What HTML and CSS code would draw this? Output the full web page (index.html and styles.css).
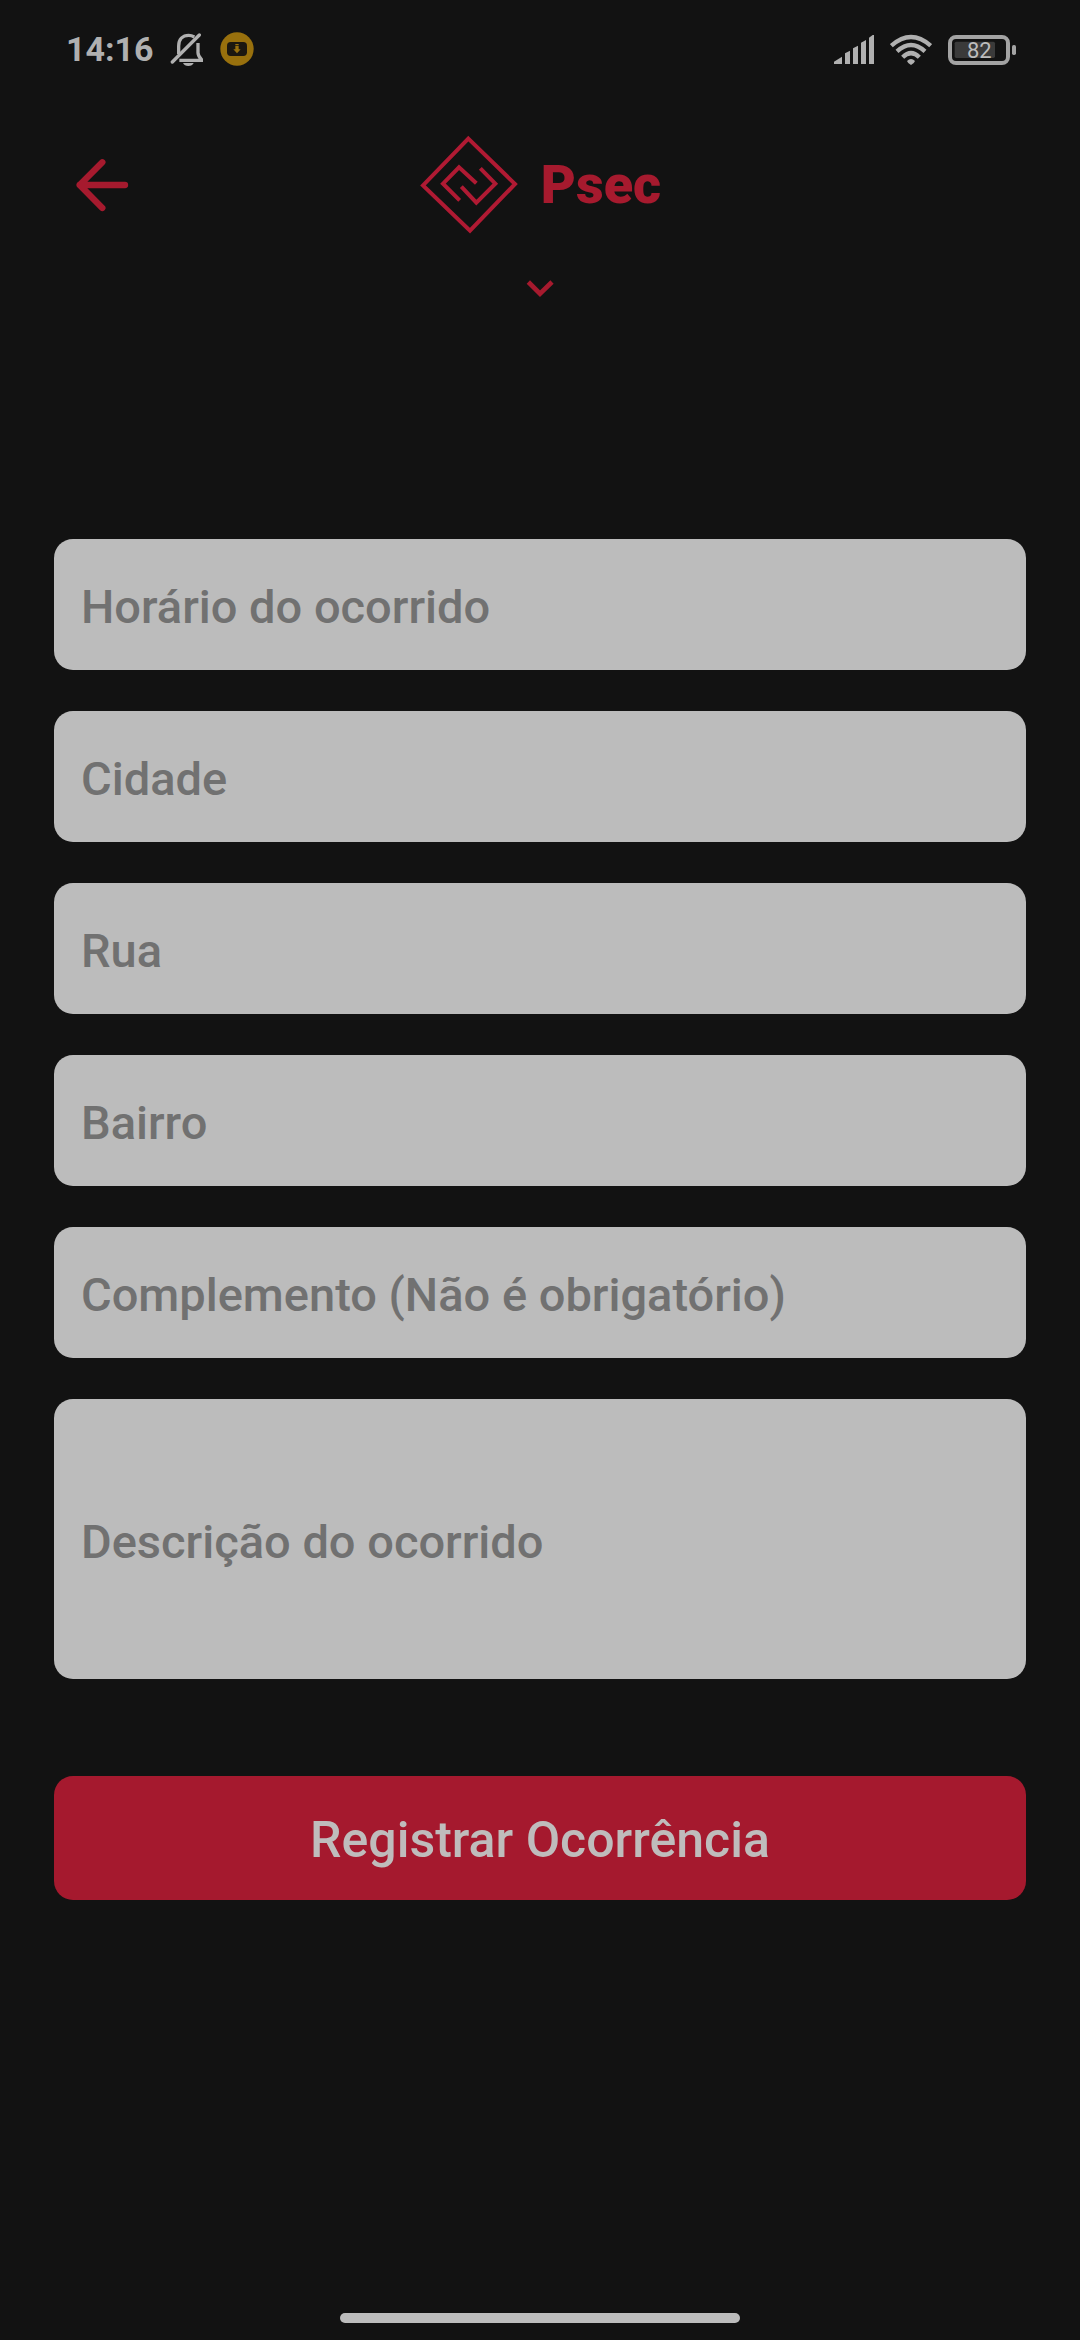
FILE: index.html
```html
<!DOCTYPE html>
<html lang="pt-BR">
<head>
<meta charset="utf-8">
<meta name="viewport" content="width=device-width, initial-scale=1">
<title>Psec</title>
<link rel="stylesheet" href="styles.css">
</head>
<body class="screen">
<div class="status-bar">
  <div class="status-group">
    <span class="clock">14:16</span>
    <svg class="icon-round" viewBox="390 66 102 102" aria-hidden="true">
      <g fill="none" stroke="currentColor" stroke-width="10">
        <path d="M416 132V108C416 88 428 76 446 76C453 76 458 78 463 81"/>
        <path d="M474 99V128Q474 137 484 148V151H418"/>
        <path d="M397 156L478 75" stroke-linecap="round"/>
      </g>
      <path d="M429 159H461Q457 168 445 168Q433 168 429 159Z" fill="currentColor"/>
    </svg>
    <svg class="icon-round" viewBox="537 66 102 102" aria-hidden="true">
      <circle cx="588" cy="117" r="50" fill="#98700d"/>
      <rect x="558" y="96" width="60" height="42" rx="11" fill="#1b1710"/>
      <path d="M583 102H593V106H583ZM583 108H593V118H599L588 130L577 118H583Z" fill="#98700d"/>
    </svg>
  </div>
  <div class="status-group">
    <svg class="icon-signal" viewBox="72 69 120 93" fill="currentColor" aria-hidden="true">
      <path d="M72 159V152L96 137V159ZM105 159V127L120 119V159ZM129 159V112L144 104V159ZM153 159V95L168 87V159ZM177 159V80L188 72H192V159Z"/>
    </svg>
    <svg class="icon-wifi" viewBox="240 69 126 93" aria-hidden="true">
      <g fill="none" stroke="currentColor" stroke-width="13">
        <path d="M244 104Q303 52 362 104"/>
        <path d="M261 121Q303 83 345 121"/>
        <path d="M278 139Q303 114 328 139"/>
      </g>
      <path d="M291 150Q303 138 315 150Q313 157 303 162Q293 157 291 150Z" fill="currentColor"/>
    </svg>
    <svg class="icon-battery" viewBox="414 69 204 93" role="img" aria-label="Bateria 82%">
      <rect x="420" y="78" width="174" height="78" rx="18" fill="none" stroke="#a3a3a3" stroke-width="12"/>
      <rect x="434" y="92" width="121" height="49" rx="5" fill="#3a3a3a"/>
      <rect x="606" y="102" width="12" height="30" rx="5" fill="#a3a3a3"/>
      <text class="battery-level" x="508" y="140" text-anchor="middle">82</text>
    </svg>
  </div>
</div>

<header class="header">
  <button class="back" type="button" aria-label="Voltar">
    <svg class="icon-back" viewBox="75 84 162 162" fill="none" stroke="currentColor" stroke-width="19" stroke-linecap="round" stroke-linejoin="round" aria-hidden="true">
      <path d="M157 97L89 165L157 234M89 165H225"/>
    </svg>
  </button>
  <div class="brand">
    <svg class="logo" viewBox="54 45 300 300" fill="none" stroke="currentColor" stroke-width="12" aria-hidden="true">
      <path d="M202 56L342 192L207 332L66 196Z"/>
      <path d="M226 190L174 142L126 191L176 241M238 145L283 191L226 248L181 200"/>
    </svg>
    <h1 class="brand-name">Psec</h1>
  </div>
</header>
<button class="expand" type="button" aria-label="Expandir">
  <svg class="icon-expand" viewBox="379 482 84 54" fill="none" stroke="currentColor" stroke-width="14" aria-hidden="true">
    <path d="M386 488L421 523L457 488"/>
  </svg>
</button>

<main class="content">
  <form class="form">
    <input class="field" type="text" aria-label="Horário do ocorrido" placeholder="Horário do ocorrido">
    <input class="field" type="text" aria-label="Cidade" placeholder="Cidade">
    <input class="field" type="text" aria-label="Rua" placeholder="Rua">
    <input class="field" type="text" aria-label="Bairro" placeholder="Bairro">
    <input class="field" type="text" aria-label="Complemento (Não é obrigatório)" placeholder="Complemento (Não é obrigatório)">
    <textarea class="field field-long" aria-label="Descrição do ocorrido" placeholder="Descrição do ocorrido"></textarea>
    <button class="submit" type="submit">Registrar Ocorrência</button>
  </form>
</main>
<div class="home-indicator"></div>
</body>
</html>
```

FILE: styles.css
```css
* {
  box-sizing: border-box;
}

.screen {
  margin: 0;
  min-height: 100vh;
  display: flex;
  flex-direction: column;
  background: #121212;
  color: #a61a2e;
  font-family: Roboto, "Liberation Sans", sans-serif;
}

svg {
  display: block;
}

button {
  padding: 0;
  border: 0;
  background: none;
  color: inherit;
  font-family: inherit;
}

/* Status bar */
.status-bar {
  display: flex;
  justify-content: space-between;
  align-items: center;
  height: 98px;
  padding: 0 64px 0 66px;
  color: #b0b0b0;
}

.status-group {
  display: flex;
  align-items: center;
  gap: 16px;
}

.clock {
  font-size: 34px;
  line-height: 40px;
  font-weight: 700;
}

.icon-round {
  width: 34px;
  height: 34px;
}

.icon-signal {
  width: 40px;
  height: 31px;
}

.icon-wifi {
  width: 42px;
  height: 31px;
}

.icon-battery {
  width: 68px;
  height: 31px;
}

.battery-level {
  font-size: 66px;
  fill: #bcbcbc;
}

/* Header */
.header {
  display: grid;
  grid-template-columns: 1fr auto 1fr;
  align-items: center;
  padding: 37px 75px 0;
}

.back {
  justify-self: start;
}

.icon-back {
  width: 54px;
  height: 54px;
}

.brand {
  display: flex;
  align-items: center;
  gap: 22px;
}

.logo {
  width: 100px;
  height: 100px;
  color: #b01a33;
}

.brand-name {
  margin: 0;
  font-size: 54px;
  line-height: 64px;
  font-weight: 900;
}

.expand {
  align-self: center;
  margin-top: 45px;
}

.icon-expand {
  width: 28px;
  height: 18px;
}

/* Form */
.content {
  padding: 241px 54px 0;
}

.form {
  display: flex;
  flex-direction: column;
  gap: 41px;
}

.field {
  width: 100%;
  height: 131px;
  padding: 4px 27px 0;
  border: 0;
  border-radius: 19px;
  background: #bcbcbc;
  color: #121212;
  font-family: inherit;
  font-size: 47px;
  line-height: 56px;
  font-weight: 500;
}

.field::placeholder {
  color: #717171;
  opacity: 1;
}

.field-long {
  display: block;
  height: 280px;
  padding-top: 115px;
  resize: none;
}

.submit {
  height: 124px;
  margin-top: 56px;
  padding-top: 4px;
  border-radius: 19px;
  background: #a5192e;
  color: #bfbcbc;
  font-size: 50px;
  line-height: 58px;
  font-weight: 500;
}

.home-indicator {
  width: 37%;
  height: 10px;
  margin: auto auto 17px;
  border-radius: 5px;
  background: #bcbcbc;
}
```
